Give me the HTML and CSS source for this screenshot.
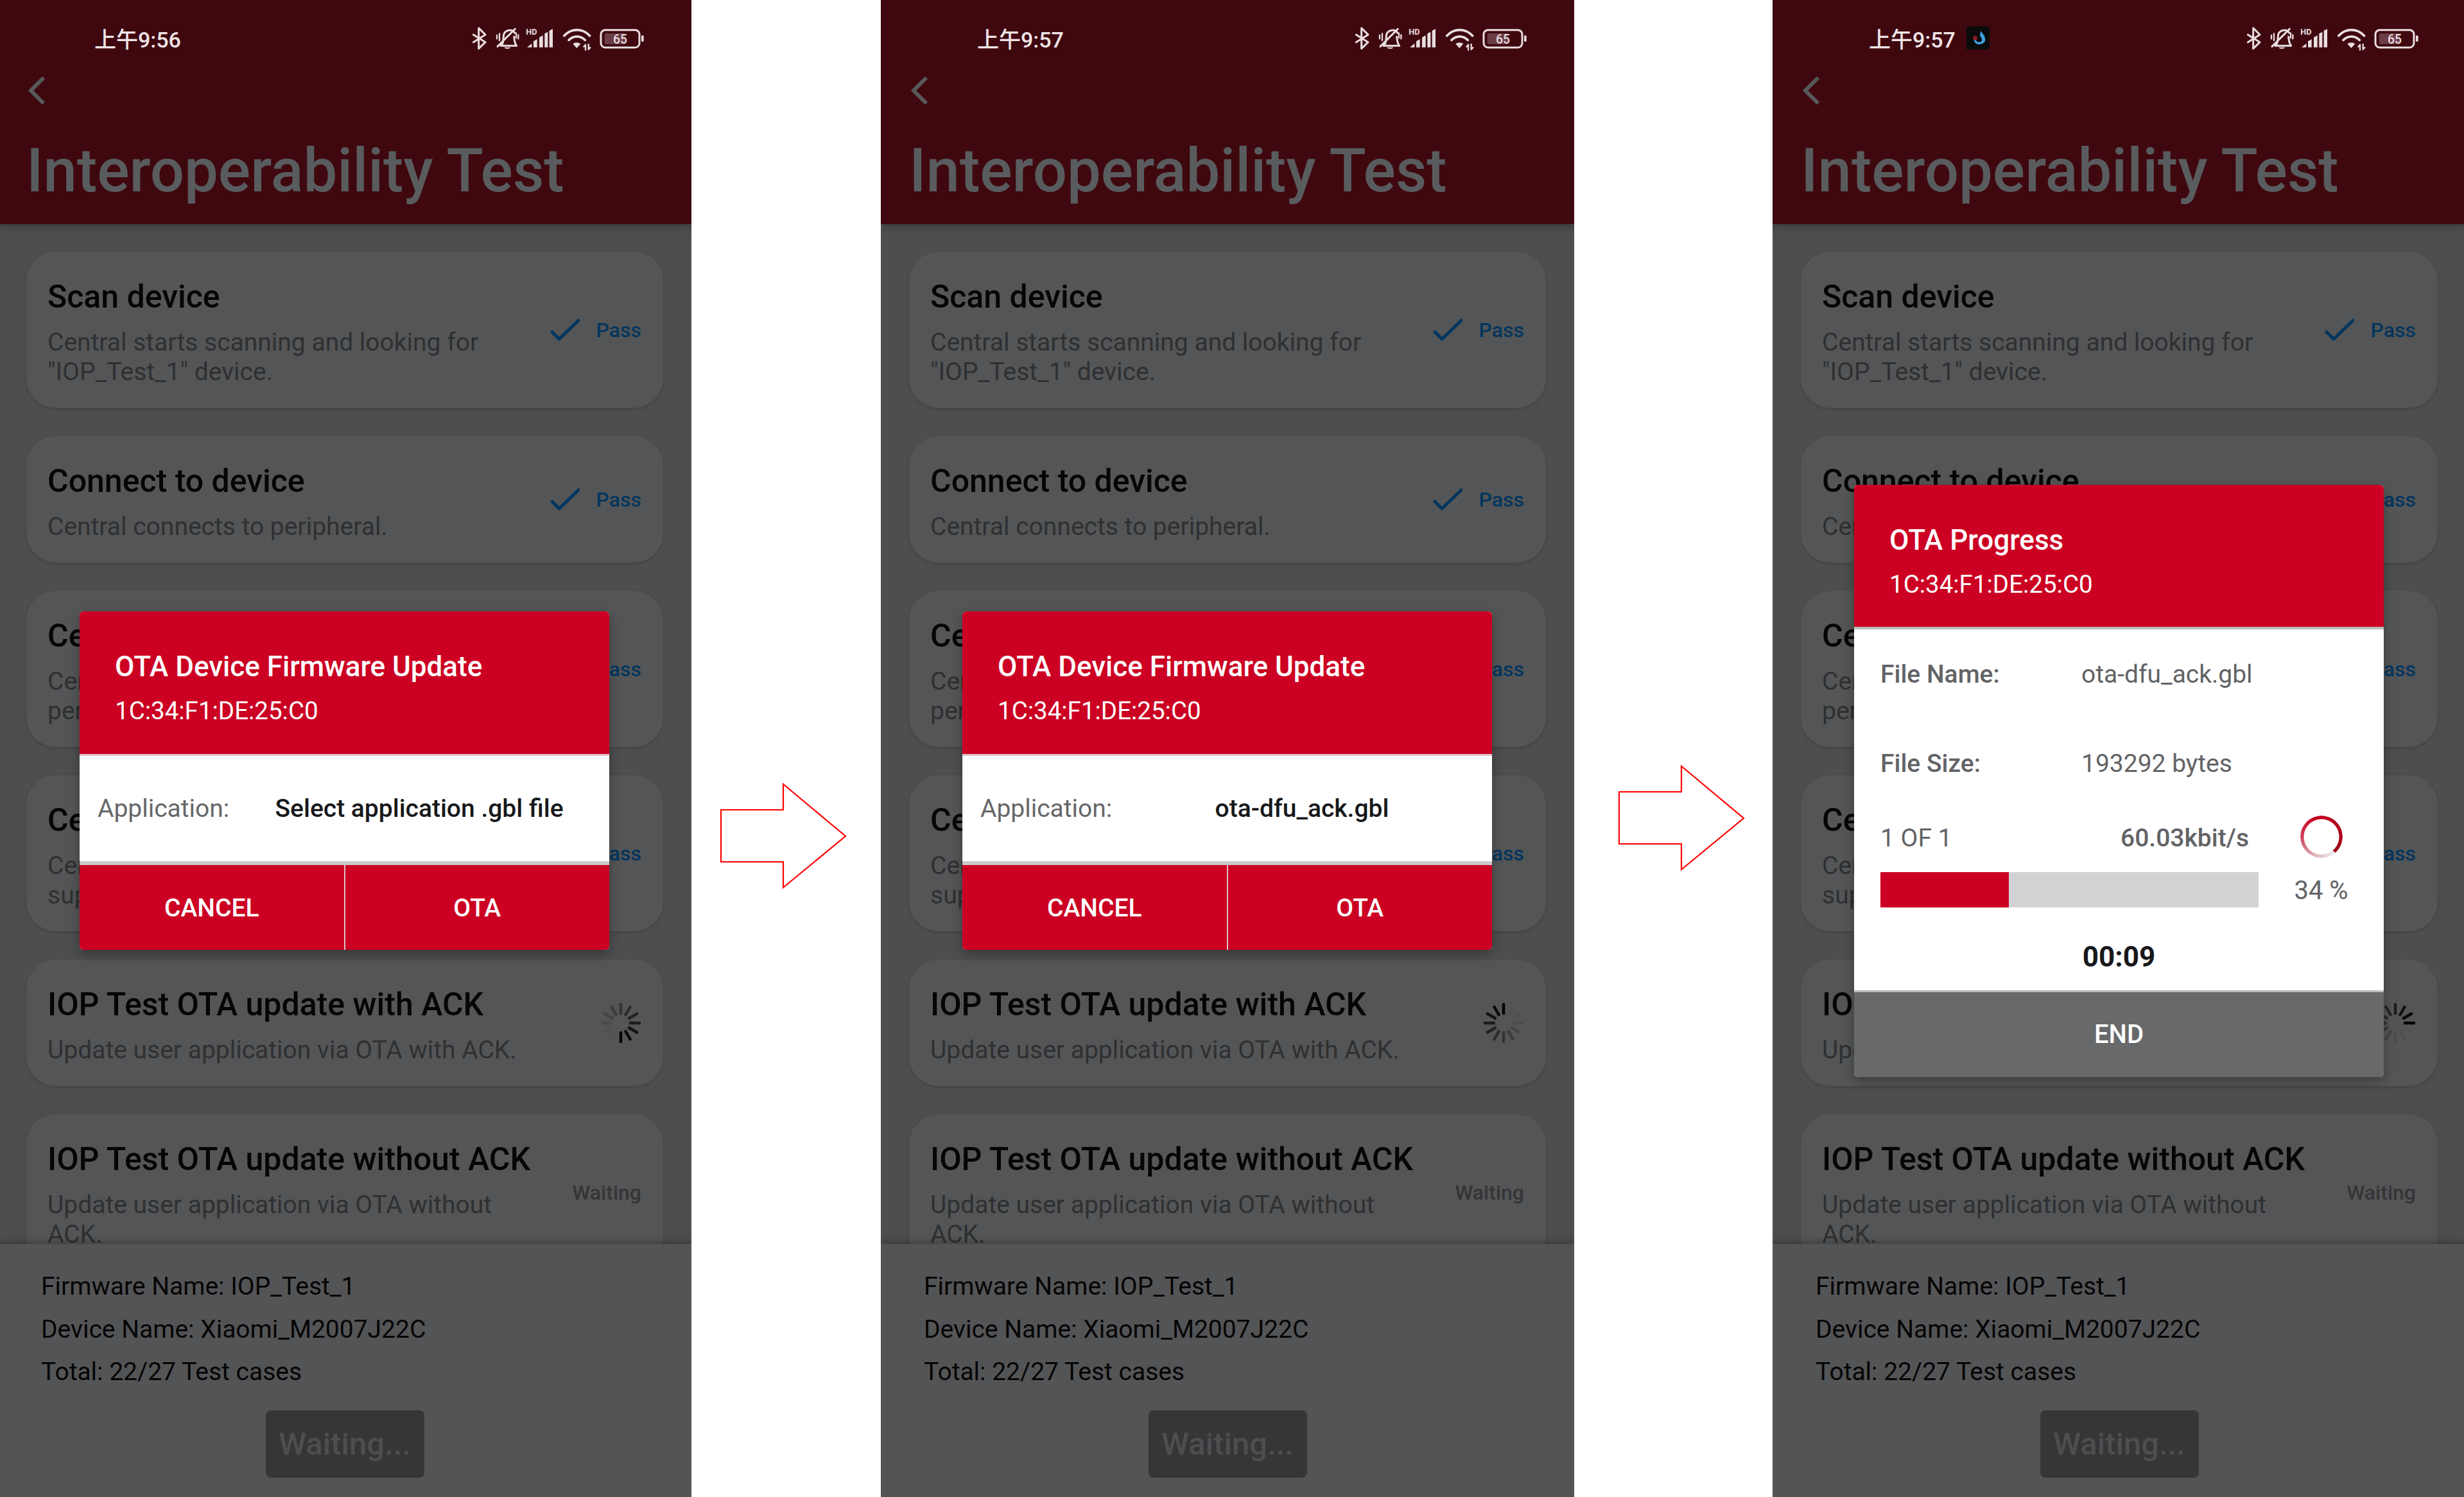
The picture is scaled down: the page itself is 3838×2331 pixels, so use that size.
FILE: index.html
```html
<!DOCTYPE html>
<html lang="en">
<head>
  <meta charset="UTF-8">
  <meta name="viewport" content="width=device-width, initial-scale=1.0">
  <title>Interoperability Test</title>
  <link rel="stylesheet" href="styles.css">
</head>
<body>
  <svg class="defs" width="0" height="0">
    <symbol id="icons" viewBox="0 0 1020 240">
      <!-- bluetooth -->
      <polyline class="ico" points="172,105 228,140 197,170 197,74 228,105 172,140"/>
      <!-- muted bell -->
      <path class="ico" d="M302 157c14-16 8-34 12-52 5-22 38-30 52-8M362 115c2 16 2 30 12 42H300M285 160l82-82"/>
      <path class="ico thin" d="M294 100v32M282 108v16M372 98v22M382 106v18"/>
      <path class="solid" d="M316 164h30c-4 9-26 9-30 0z"/>
      <!-- signal -->
      <text class="hd" x="418" y="106">HD</text>
      <path class="solid" d="M423 164l22-18v18zM453 164v-28l17-10v38zM480 164v-46l17-10v56zM505 164v-64l15-8v72zM527 164V86l16-8v86z"/>
      <!-- wifi -->
      <path class="ico wide" d="M596 110c34-36 86-36 120 0M618 130c22-22 54-22 76 0"/>
      <path class="solid" d="M637 148c10-8 26-8 36 0l-18 20z"/>
      <path class="ico thin" d="M696 176v-24M696 152l-8 9M710 150v24M710 174l8-9"/>
      <!-- battery -->
      <rect class="ico" x="768" y="83" width="180" height="82" rx="20"/>
      <rect class="solid level" x="785" y="99" width="96" height="50" rx="6"/>
      <text class="pct" x="858" y="146">65</text>
      <rect class="solid" x="957" y="108" width="11" height="30" rx="5"/>
    </symbol>
    <symbol id="check" viewBox="0 0 46 36">
      <path d="M3 21l11 11L44 3"/>
    </symbol>
    <symbol id="chevron" viewBox="0 0 28 46">
      <path d="M25 3L5 23l20 20"/>
    </symbol>
    <symbol id="ticks" viewBox="-34 -34 68 68">
      <rect class="t0" x="-2.2" y="13" width="4.4" height="18" rx="1"/>
      <rect class="t1" x="-2.2" y="13" width="4.4" height="18" rx="1" transform="rotate(-30)"/>
      <rect class="t2" x="-2.2" y="13" width="4.4" height="18" rx="1" transform="rotate(-60)"/>
      <rect class="t3" x="-2.2" y="13" width="4.4" height="18" rx="1" transform="rotate(-90)"/>
      <rect class="t4" x="-2.2" y="13" width="4.4" height="18" rx="1" transform="rotate(-120)"/>
      <rect class="t5" x="-2.2" y="13" width="4.4" height="18" rx="1" transform="rotate(-150)"/>
      <rect class="t6" x="-2.2" y="13" width="4.4" height="18" rx="1" transform="rotate(180)"/>
      <rect class="t7" x="-2.2" y="13" width="4.4" height="18" rx="1" transform="rotate(150)"/>
      <rect class="t8" x="-2.2" y="13" width="4.4" height="18" rx="1" transform="rotate(120)"/>
      <rect class="t9" x="-2.2" y="13" width="4.4" height="18" rx="1" transform="rotate(90)"/>
      <rect class="t10" x="-2.2" y="13" width="4.4" height="18" rx="1" transform="rotate(60)"/>
      <rect class="t11" x="-2.2" y="13" width="4.4" height="18" rx="1" transform="rotate(30)"/>
    </symbol>
  </svg>

  <div class="sheet">

    <!-- first screen -->
    <div class="phone phone-first">
      <header class="app-bar">
        <div class="status-bar">
          <span class="clock">上午9:56</span>
          <svg class="status-icons"><use href="#icons"/></svg>
        </div>
        <svg class="back"><use href="#chevron"/></svg>
        <h1>Interoperability Test</h1>
      </header>
      <main class="list">
        <div class="card">
          <div class="card-text">
            <h2>Scan device</h2>
            <p>Central starts scanning and looking for "IOP_Test_1" device.</p>
          </div>
          <div class="state"><svg class="tick"><use href="#check"/></svg><span>Pass</span></div>
        </div>
        <div class="card">
          <div class="card-text">
            <h2>Connect to device</h2>
            <p>Central connects to peripheral.</p>
          </div>
          <div class="state"><svg class="tick"><use href="#check"/></svg><span>Pass</span></div>
        </div>
        <div class="card">
          <div class="card-text">
            <h2>Central service discovery</h2>
            <p>Central discovers services on the connected<br>peripheral device.</p>
          </div>
          <div class="state"><svg class="tick"><use href="#check"/></svg><span>Pass</span></div>
        </div>
        <div class="card">
          <div class="card-text">
            <h2>Central read and write</h2>
            <p>Central reads and writes each attribute<br>supported by the peripheral.</p>
          </div>
          <div class="state"><svg class="tick"><use href="#check"/></svg><span>Pass</span></div>
        </div>
        <div class="card">
          <div class="card-text">
            <h2>IOP Test OTA update with ACK</h2>
            <p>Update user application via OTA with ACK.</p>
          </div>
          <svg class="spinner spin-a"><use href="#ticks"/></svg>
        </div>
        <div class="card">
          <div class="card-text">
            <h2>IOP Test OTA update without ACK</h2>
            <p>Update user application via OTA without ACK.</p>
          </div>
          <div class="state waiting">Waiting</div>
        </div>
      </main>
      <footer class="summary">
        <p>Firmware Name: IOP_Test_1</p>
        <p>Device Name: Xiaomi_M2007J22C</p>
        <p>Total: 22/27 Test cases</p>
        <div class="run-btn">Waiting...</div>
      </footer>
      <div class="dialog dialog-dfu">
        <div class="dialog-head">
          <h3>OTA Device Firmware Update</h3>
          <div class="mac">1C:34:F1:DE:25:C0</div>
        </div>
        <div class="app-row">
          <span class="app-label">Application:</span>
          <span class="app-value">Select application .gbl file</span>
        </div>
        <div class="dialog-actions">
          <div>CANCEL</div>
          <div>OTA</div>
        </div>
      </div>
    </div>

    <div class="gutter gutter-one">
      <svg class="arrow" viewBox="0 0 198 167"><path d="M2 43h97V3l97 81-97 80v-40H2z"/></svg>
    </div>

    <!-- second screen -->
    <div class="phone">
      <header class="app-bar">
        <div class="status-bar">
          <span class="clock">上午9:57</span>
          <svg class="status-icons"><use href="#icons"/></svg>
        </div>
        <svg class="back"><use href="#chevron"/></svg>
        <h1>Interoperability Test</h1>
      </header>
      <main class="list">
        <div class="card">
          <div class="card-text">
            <h2>Scan device</h2>
            <p>Central starts scanning and looking for "IOP_Test_1" device.</p>
          </div>
          <div class="state"><svg class="tick"><use href="#check"/></svg><span>Pass</span></div>
        </div>
        <div class="card">
          <div class="card-text">
            <h2>Connect to device</h2>
            <p>Central connects to peripheral.</p>
          </div>
          <div class="state"><svg class="tick"><use href="#check"/></svg><span>Pass</span></div>
        </div>
        <div class="card">
          <div class="card-text">
            <h2>Central service discovery</h2>
            <p>Central discovers services on the connected<br>peripheral device.</p>
          </div>
          <div class="state"><svg class="tick"><use href="#check"/></svg><span>Pass</span></div>
        </div>
        <div class="card">
          <div class="card-text">
            <h2>Central read and write</h2>
            <p>Central reads and writes each attribute<br>supported by the peripheral.</p>
          </div>
          <div class="state"><svg class="tick"><use href="#check"/></svg><span>Pass</span></div>
        </div>
        <div class="card">
          <div class="card-text">
            <h2>IOP Test OTA update with ACK</h2>
            <p>Update user application via OTA with ACK.</p>
          </div>
          <svg class="spinner spin-b"><use href="#ticks"/></svg>
        </div>
        <div class="card">
          <div class="card-text">
            <h2>IOP Test OTA update without ACK</h2>
            <p>Update user application via OTA without ACK.</p>
          </div>
          <div class="state waiting">Waiting</div>
        </div>
      </main>
      <footer class="summary">
        <p>Firmware Name: IOP_Test_1</p>
        <p>Device Name: Xiaomi_M2007J22C</p>
        <p>Total: 22/27 Test cases</p>
        <div class="run-btn">Waiting...</div>
      </footer>
      <div class="dialog dialog-dfu">
        <div class="dialog-head">
          <h3>OTA Device Firmware Update</h3>
          <div class="mac">1C:34:F1:DE:25:C0</div>
        </div>
        <div class="app-row">
          <span class="app-label">Application:</span>
          <span class="app-value">ota-dfu_ack.gbl</span>
        </div>
        <div class="dialog-actions">
          <div>CANCEL</div>
          <div>OTA</div>
        </div>
      </div>
    </div>

    <div class="gutter gutter-two">
      <svg class="arrow" viewBox="0 0 198 167"><path d="M2 43h97V3l97 81-97 80v-40H2z"/></svg>
    </div>

    <!-- third screen -->
    <div class="phone">
      <header class="app-bar">
        <div class="status-bar">
          <span class="clock">上午9:57</span>
          <svg class="notif" viewBox="0 0 36 36">
            <rect width="36" height="36" fill="#0b0b0c"/>
            <path d="M22 7l3 4c3 3 5 8 4 12-3 5-11 7-15 3-2-2-3-4-2-6l3 2c2 3 5 3 8 2 2-2 1-6-2-9z" fill="#3fa0dc"/>
            <circle cx="13.5" cy="18" r="3.5" fill="#8c1a2a"/>
          </svg>
          <svg class="status-icons"><use href="#icons"/></svg>
        </div>
        <svg class="back"><use href="#chevron"/></svg>
        <h1>Interoperability Test</h1>
      </header>
      <main class="list">
        <div class="card">
          <div class="card-text">
            <h2>Scan device</h2>
            <p>Central starts scanning and looking for "IOP_Test_1" device.</p>
          </div>
          <div class="state"><svg class="tick"><use href="#check"/></svg><span>Pass</span></div>
        </div>
        <div class="card">
          <div class="card-text">
            <h2>Connect to device</h2>
            <p>Central connects to peripheral.</p>
          </div>
          <div class="state"><svg class="tick"><use href="#check"/></svg><span>Pass</span></div>
        </div>
        <div class="card">
          <div class="card-text">
            <h2>Central service discovery</h2>
            <p>Central discovers services on the connected<br>peripheral device.</p>
          </div>
          <div class="state"><svg class="tick"><use href="#check"/></svg><span>Pass</span></div>
        </div>
        <div class="card">
          <div class="card-text">
            <h2>Central read and write</h2>
            <p>Central reads and writes each attribute<br>supported by the peripheral.</p>
          </div>
          <div class="state"><svg class="tick"><use href="#check"/></svg><span>Pass</span></div>
        </div>
        <div class="card">
          <div class="card-text">
            <h2>IOP Test OTA update with ACK</h2>
            <p>Update user application via OTA with ACK.</p>
          </div>
          <svg class="spinner spin-c"><use href="#ticks"/></svg>
        </div>
        <div class="card">
          <div class="card-text">
            <h2>IOP Test OTA update without ACK</h2>
            <p>Update user application via OTA without ACK.</p>
          </div>
          <div class="state waiting">Waiting</div>
        </div>
      </main>
      <footer class="summary">
        <p>Firmware Name: IOP_Test_1</p>
        <p>Device Name: Xiaomi_M2007J22C</p>
        <p>Total: 22/27 Test cases</p>
        <div class="run-btn">Waiting...</div>
      </footer>
      <div class="dialog dialog-progress">
        <div class="dialog-head">
          <h3>OTA Progress</h3>
          <div class="mac">1C:34:F1:DE:25:C0</div>
        </div>
        <div class="progress-body">
          <div class="file-row"><b>File Name:</b><span>ota-dfu_ack.gbl</span></div>
          <div class="file-row"><b>File Size:</b><span>193292 bytes</span></div>
          <div class="stats">
            <div class="stats-main">
              <div class="stats-top"><span>1 OF 1</span><b>60.03kbit/s</b></div>
              <div class="bar"><div class="bar-fill" style="width: 34%"></div></div>
            </div>
            <div class="stats-side">
              <div class="ring"></div>
              <div class="percent">34 %</div>
            </div>
          </div>
          <div class="elapsed">00:09</div>
        </div>
        <div class="end-btn">END</div>
      </div>
    </div>

  </div>
</body>
</html>
```

FILE: styles.css
```css
html, body {
  margin: 0;
  background: #ffffff;
}
body {
  font-family: Roboto, "Noto Sans CJK SC", sans-serif;
}
.defs {
  display: block;
  height: 0;
}
.sheet {
  display: flex;
  width: 3838px;
  height: 2331px;
  overflow: hidden;
}

/* phone frame */
.phone {
  position: relative;
  display: flex;
  flex-direction: column;
  flex: none;
  width: 1080px;
  height: 2331px;
  background: #4d4e4f;
  overflow: hidden;
}
.phone-first {
  margin-left: -3px;
}
.gutter {
  display: flex;
  flex: none;
  align-items: flex-start;
}
.gutter-one {
  width: 295px;
  padding-top: 1218px;
  box-sizing: border-box;
  padding-left: 44px;
}
.gutter-two {
  width: 309px;
  padding-top: 1190px;
  box-sizing: border-box;
  padding-left: 68px;
}
.arrow {
  width: 198px;
  height: 167px;
}
.arrow path {
  fill: #ffffff;
  stroke: #ff0000;
  stroke-width: 2.2;
}

/* header */
.app-bar {
  position: relative;
  z-index: 1;
  flex: none;
  height: 349px;
  background: #3f080f;
  box-shadow: 0 4px 12px rgba(0, 0, 0, 0.25);
}
.status-bar {
  display: flex;
  align-items: center;
  height: 118px;
  padding: 0 57px 0 150px;
}
.clock {
  font-size: 34px;
  font-weight: 500;
  color: #efe5e7;
}
.notif {
  width: 36px;
  height: 36px;
  margin-left: 17px;
}
.status-icons {
  width: 340px;
  height: 80px;
  margin-left: auto;
}
.ico {
  fill: none;
  stroke: #e9dee0;
  stroke-width: 9;
  stroke-linecap: round;
  stroke-linejoin: round;
}
.ico.thin {
  stroke-width: 7;
}
.ico.wide {
  stroke-width: 11;
}
.solid {
  fill: #e9dee0;
}
.solid.level {
  fill: #6b3d46;
}
.hd {
  font-size: 38px;
  font-weight: 700;
  fill: #e9dee0;
}
.pct {
  font-size: 58px;
  font-weight: 500;
  fill: #e9dee0;
  text-anchor: middle;
}
.back {
  display: block;
  width: 28px;
  height: 46px;
  margin-left: 46px;
  fill: none;
  stroke: #58595b;
  stroke-width: 6;
}
.app-bar h1 {
  margin: 47px 0 0 44px;
  font-size: 94px;
  line-height: 110px;
  font-weight: 500;
  color: #595c5e;
}

/* test cards */
.list {
  display: flex;
  flex: 1;
  flex-direction: column;
  gap: 44px;
  min-height: 0;
  padding: 43px 44px 0;
  overflow: hidden;
}
.card {
  display: flex;
  flex: none;
  align-items: center;
  justify-content: space-between;
  padding: 40px 34px 33px 33px;
  background: #545556;
  border-radius: 46px;
  box-shadow: 0 2px 5px rgba(0, 0, 0, 0.15);
}
.card-text {
  flex: none;
  width: 765px;
}
.card-text h2 {
  margin: 0 0 18px;
  font-size: 50px;
  line-height: 60px;
  font-weight: 500;
  color: #050505;
}
.card-text p {
  margin: 0;
  font-size: 39px;
  line-height: 46px;
  color: #2e3032;
}
.state {
  display: flex;
  align-items: center;
  gap: 26px;
  margin-bottom: 6px;
  font-size: 32px;
  font-weight: 500;
  color: #03365f;
}
.state.waiting {
  color: #343537;
}
.tick {
  width: 46px;
  height: 36px;
  fill: none;
  stroke: #03365f;
  stroke-width: 5;
  stroke-linecap: round;
  stroke-linejoin: round;
}
.spinner {
  width: 68px;
  height: 68px;
  margin: 0 -2px 6px 0;
}
.spin-b {
  transform: rotate(180deg);
}
.spin-c {
  transform: rotate(-90deg);
}
.t0 { fill: #000000; }
.t1 { fill: #0a0a0b; }
.t2 { fill: #121213; }
.t3 { fill: #1a1b1c; }
.t4 { fill: #222324; }
.t5 { fill: #2b2c2d; }
.t6 { fill: #333435; }
.t7 { fill: #3b3c3d; }
.t8 { fill: #434445; }
.t9 { fill: #4a4b4c; }
.t10 { fill: #4f5051; }
.t11 { fill: #525354; }

/* footer */
.summary {
  position: relative;
  z-index: 1;
  flex: none;
  height: 394px;
  box-sizing: border-box;
  padding: 33px 67px 0;
  background: #535456;
  box-shadow: 0 -4px 10px rgba(0, 0, 0, 0.25);
}
.summary p {
  margin: 0;
  font-size: 39px;
  line-height: 66.5px;
  color: #050505;
}
.run-btn {
  width: 247px;
  height: 105px;
  margin: 26px auto 0;
  background: #353638;
  border-radius: 8px;
  font-size: 49px;
  font-weight: 500;
  line-height: 105px;
  text-align: center;
  color: #4d4e50;
}

/* dialogs */
.dialog {
  position: absolute;
  left: 127px;
  z-index: 2;
  display: flex;
  flex-direction: column;
  width: 825px;
  border-radius: 6px;
  overflow: hidden;
  background: #ffffff;
  box-shadow: 0 6px 18px rgba(0, 0, 0, 0.3);
}
.dialog-dfu {
  top: 952px;
  height: 527px;
}
.dialog-progress {
  top: 755px;
  height: 922px;
}
.dialog-head {
  flex: none;
  height: 222px;
  box-sizing: border-box;
  padding: 58px 55px 0;
  background: #cc0022;
  color: #ffffff;
}
.dialog-progress .dialog-head {
  height: 221px;
}
.dialog-head h3 {
  margin: 0;
  font-size: 44px;
  line-height: 56px;
  font-weight: 500;
}
.mac {
  margin-top: 16px;
  font-size: 38.5px;
  line-height: 50px;
}
.app-row {
  display: flex;
  flex: 1;
  align-items: center;
  padding-left: 28px;
  border-top: 3px solid #d9c3c8;
  border-bottom: 6px solid #c9cacc;
  font-size: 39px;
}
.app-label {
  flex: none;
  width: 205px;
  color: #666769;
}
.app-value {
  flex: 1;
  font-weight: 500;
  text-align: center;
  color: #17181a;
}
.dialog-actions {
  display: flex;
  flex: none;
  height: 132px;
  background: #cc0022;
  font-size: 39px;
  font-weight: 500;
  line-height: 134px;
  text-align: center;
  color: #ffffff;
}
.dialog-actions div {
  flex: 1;
}
.dialog-actions div + div {
  border-left: 2px solid #d9c3c8;
}
.progress-body {
  flex: 1;
  padding-left: 41px;
  border-top: 4px solid #b9bbbd;
  border-bottom: 3px solid #b9bbbd;
  font-size: 39px;
  color: #626365;
}
.progress-body b {
  font-weight: 500;
}
.file-row {
  display: flex;
  align-items: center;
  height: 139px;
}
.file-row b {
  flex: none;
  width: 313px;
}
.stats {
  display: flex;
  height: 155px;
}
.stats-main {
  flex: none;
  width: 589px;
}
.stats-top {
  display: flex;
  align-items: center;
  justify-content: space-between;
  height: 94px;
  margin-bottom: 6px;
  padding-right: 15px;
}
.bar {
  height: 55px;
  background: #d1d2d4;
}
.bar-fill {
  height: 100%;
  background: #cc0022;
}
.stats-side {
  display: flex;
  flex: 1;
  flex-direction: column;
  align-items: center;
}
.ring {
  width: 66px;
  height: 66px;
  margin-top: 12px;
  border-radius: 50%;
  background: conic-gradient(from 140deg, #ececec, #e2b5bd 60deg, #cd4059 130deg, #c80021 200deg, #9f0016 360deg);
  -webkit-mask: radial-gradient(circle, transparent 27px, #000 28px);
  mask: radial-gradient(circle, transparent 27px, #000 28px);
}
.percent {
  margin-top: 27px;
  font-size: 40px;
  line-height: 48px;
}
.elapsed {
  box-sizing: border-box;
  height: 129px;
  margin-left: -41px;
  padding-top: 27px;
  font-size: 44px;
  font-weight: 700;
  line-height: 100px;
  text-align: center;
  color: #17181a;
}
.end-btn {
  flex: none;
  height: 132px;
  background: #68696b;
  font-size: 40px;
  font-weight: 500;
  line-height: 132px;
  text-align: center;
  color: #ffffff;
}
```
